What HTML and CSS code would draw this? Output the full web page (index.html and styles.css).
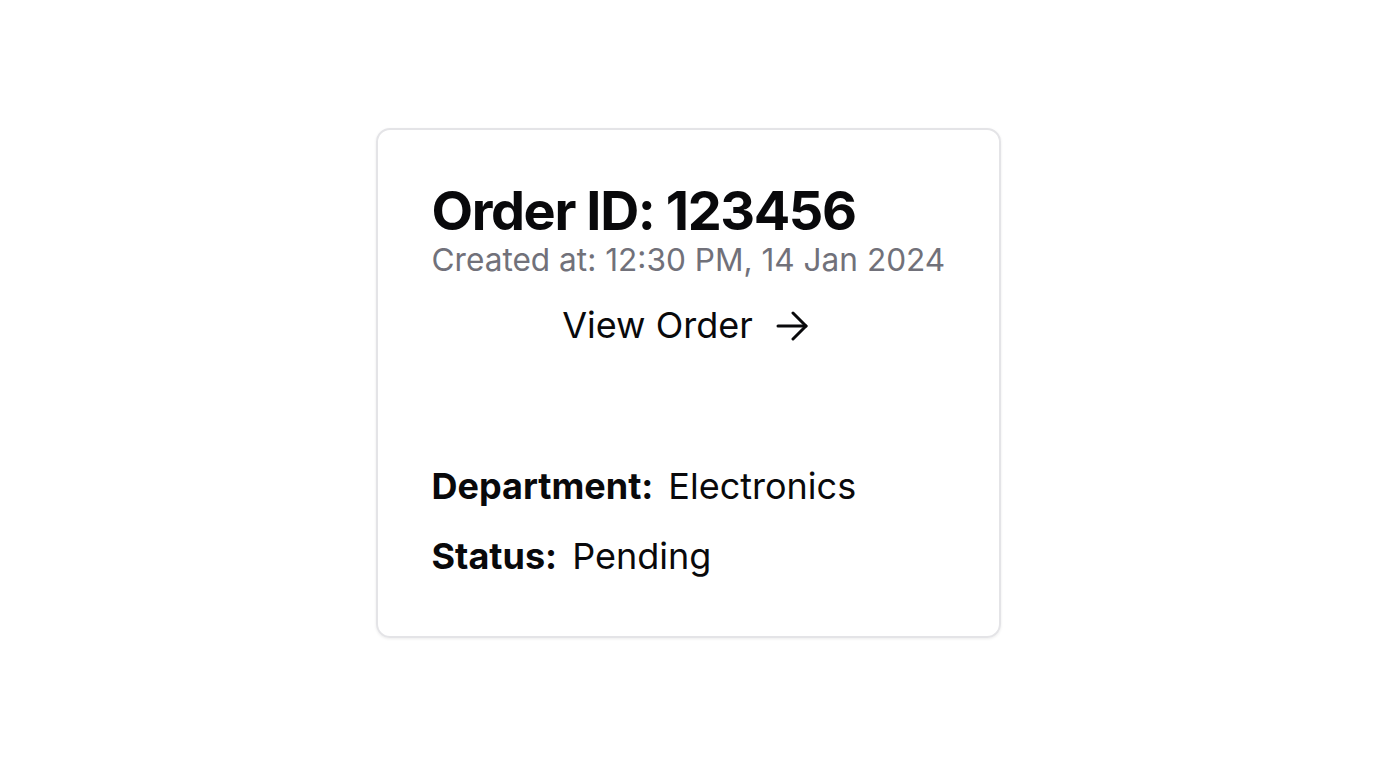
FILE: index.html
```html
<!DOCTYPE html>
<html>
<head>
<meta charset="utf-8">
<link rel="stylesheet" href="styles.css">
</head>
<body>
<div class="page">
  <div class="card">
    <h1 class="title">Order ID: 123456</h1>
    <p class="created">Created at: 12:30 PM, 14 Jan 2024</p>
    <a class="view" href="#">View Order
      <svg class="arrow" width="32" height="32" viewBox="0 0 32 32" fill="none" stroke="currentColor" stroke-width="3" stroke-linecap="round" stroke-linejoin="round"><path d="M2 16h28"/><path d="M17 3l13 13-13 13"/></svg>
    </a>
    <div class="details">
      <div class="row"><span class="label">Department:</span><span class="value">Electronics</span></div>
      <div class="row"><span class="label">Status:</span><span class="value">Pending</span></div>
    </div>
  </div>
</div>
</body>
</html>
```
FILE: styles.css
```css
* { box-sizing: border-box; }
html, body { margin: 0; padding: 0; background: #fff; }
body { font-family: Inter, "Noto Sans", sans-serif; color: #09090b; }
.page {
  height: 768px;
  padding-top: 128px;
}
.card {
  width: 625px;
  height: 510px;
  margin: 0 auto;
  border: 2px solid #e4e4e7;
  border-radius: 14px;
  box-shadow: 0 1px 3px rgba(0,0,0,0.08);
  padding: 51px 54px 58px;
  display: flex;
  flex-direction: column;
}
.title {
  margin: 0;
  font-size: 54px;
  font-weight: 700;
  line-height: 60px;
  letter-spacing: -1.4px;
  white-space: nowrap;
}
.created {
  margin: 0;
  font-size: 31.6px;
  line-height: 1.2;
  color: #71717a;
  white-space: nowrap;
}
.view {
  align-self: center;
  display: flex;
  align-items: center;
  gap: 23px;
  margin-top: 25px;
  padding-right: 6px;
  font-size: 36px;
  line-height: 1.2;
  color: #09090b;
  text-decoration: none;
}
.arrow { width: 32px; height: 32px; }
.details {
  margin-top: auto;
  display: flex;
  flex-direction: column;
  gap: 27px;
}
.row { font-size: 36px; line-height: 1.2; display: flex; gap: 15px; }
.label { font-weight: 700; }
```
